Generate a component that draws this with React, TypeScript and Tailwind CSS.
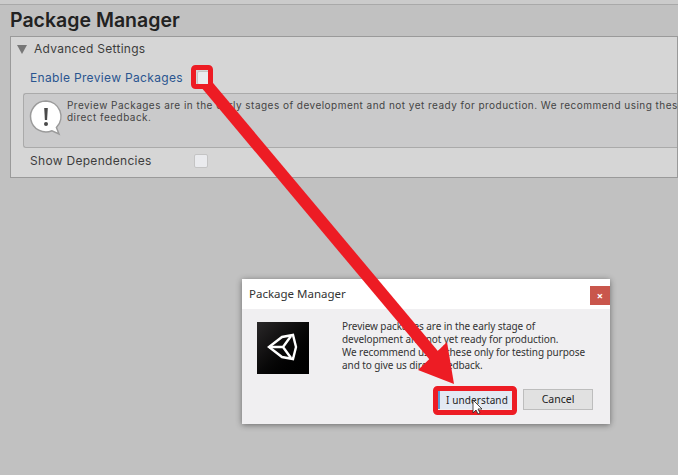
const uiFont = { fontFamily: '"Inter", "Liberation Sans", sans-serif' };
const dialogFont = { fontFamily: '"Noto Sans", sans-serif' };

const Checkbox = () => (
  <div className="h-[14px] w-[14px] rounded-[2px] border border-[#c4c4c4] bg-[#eaebee]" />
);

const HelpIcon = () => (
  <svg width="36" height="38" viewBox="0 0 36 38" className="shrink-0">
    <path d="M18 2a15.5 15.5 0 1 0 6 29.8l7 3.2-2.6-6.5A15.5 15.5 0 0 0 18 2z" fill="#fff" stroke="#9b9b9b" strokeWidth="1.5" />
    <path d="M16.2 9h3.6l-.7 12h-2.2z" fill="#4a4a4a" />
    <circle cx="18" cy="25" r="2" fill="#4a4a4a" />
  </svg>
);

const UnityLogo = () => (
  <svg width="52" height="52" viewBox="0 0 52 52">
    <g fill="none" stroke="#fff" strokeWidth="2.4" strokeLinejoin="miter">
      <path d="M12 25 L25 15 L36 13 L39 25 L36 37 L25 35 Z" />
      <path d="M12 25 H26 L34 14 M26 25 L34 36" />
    </g>
  </svg>
);

// arrow plus the two highlight boxes, drawn over everything else
const Annotation = () => (
  <svg width="678" height="475" className="absolute inset-0 pointer-events-none">
    <line x1="207" y1="85" x2="436" y2="358" stroke="#ed1c24" strokeWidth="12" />
    <polygon points="418,370 447,342 454,384" fill="#ed1c24" />
    <rect x="193.5" y="67.5" width="17" height="19" rx="2" fill="none" stroke="#ed1c24" strokeWidth="5" />
    <rect x="435.5" y="388.5" width="79" height="24" rx="2" fill="none" stroke="#ed1c24" strokeWidth="5" />
    <path d="M473 400v13l3-3 2 4 2-1-2-4h4z" fill="#fff" stroke="#222" strokeWidth="0.8" />
  </svg>
);

const Dialog = () => (
  <div className="absolute left-[242px] top-[279px] h-[145px] w-[368px] bg-[#f0eff1] shadow-[0_1px_6px_rgba(0,0,0,0.45)]" style={dialogFont}>
    <div className="flex h-[30px] items-start justify-between bg-white">
      <span className="pl-[7px] pt-[7px] text-[11.5px] leading-[15px] text-[#333]">
        Package Manager
      </span>
      <div className="mt-[7px] flex h-[19px] w-[20px] items-center justify-center bg-[#c9564c] text-[11px] font-bold leading-none text-white">
        ×
      </div>
    </div>
    <div className="flex pl-[15px] pt-[13px]">
      <div className="h-[52px] w-[52px] bg-gradient-to-br from-[#2a2829] to-black">
        <UnityLogo />
      </div>
      <p className="ml-[33px] -mt-[2px] whitespace-nowrap text-[10px] leading-[13px] tracking-[-0.08px] text-[#333]">
        Preview packages are in the early stage of
        <br />
        development and not yet ready for production.
        <br />
        We recommend using these only for testing purpose
        <br />
        and to give us direct feedback.
      </p>
    </div>
    <div className="mt-[15px] flex items-center justify-end gap-[11px] pr-[17px]">
      <div className="flex h-[18px] w-[74px] items-center justify-center border-l-2 border-[#5b9bd5] bg-[#e3e9f3] pl-[2px] pt-[1px] text-[10px] tracking-[0.1px] text-[#222]">
        I understand
      </div>
      <div className="flex h-[21px] w-[70px] items-center justify-center border border-[#bdbdbd] bg-[#e1e1e1] pt-[1px] text-[10.5px] text-[#222]">
        Cancel
      </div>
    </div>
  </div>
);

export default function App() {
  return (
    <div className="relative h-[475px] w-[678px] overflow-hidden bg-[#c1c1c1]" style={uiFont}>
      <div className="h-[5px] border-b border-[#a9a9a9] bg-[#cbcbcb]" />
      <h1 className="h-[31px] pl-[10px] pt-[2px] text-[19.5px] font-semibold leading-[26px] text-[#222]">
        Package Manager
      </h1>
      <section className="ml-[10px] h-[142px] border border-[#9a9a9a] bg-[#d6d6d6] text-[12px] text-[#3d3d3d]">
        <div className="flex h-[24px] items-center pl-[6px]">
          <span className="h-0 w-0 border-x-[5px] border-t-[9px] border-x-transparent border-t-[#777]" />
          <span className="ml-[7px] tracking-[0.28px]">Advanced Settings</span>
        </div>
        <div className="mt-[3px] flex h-[27px] items-center pl-[19px]">
          <span className="w-[167px] tracking-[0.33px] text-[#2a5590]">Enable Preview Packages</span>
          <Checkbox />
        </div>
        <div className="ml-[12px] mt-[2px] flex h-[55px] rounded-l-[3px] border border-r-0 border-[#aaa] bg-[#cacacb] pl-[4px] pt-[5px]">
          <HelpIcon />
          <p className="ml-[3px] whitespace-nowrap text-[10px] leading-[12px] tracking-[0.47px] text-[#444]">
            Preview Packages are in the early stages of development and not yet ready for production. We recommend using these only for testing purposes and to give us
            <br />
            direct feedback.
          </p>
        </div>
        <div className="flex h-[25px] items-center pl-[19px]">
          <span className="w-[164px] tracking-[0.3px]">Show Dependencies</span>
          <Checkbox />
        </div>
      </section>
      <Dialog />
      <Annotation />
    </div>
  );
}
